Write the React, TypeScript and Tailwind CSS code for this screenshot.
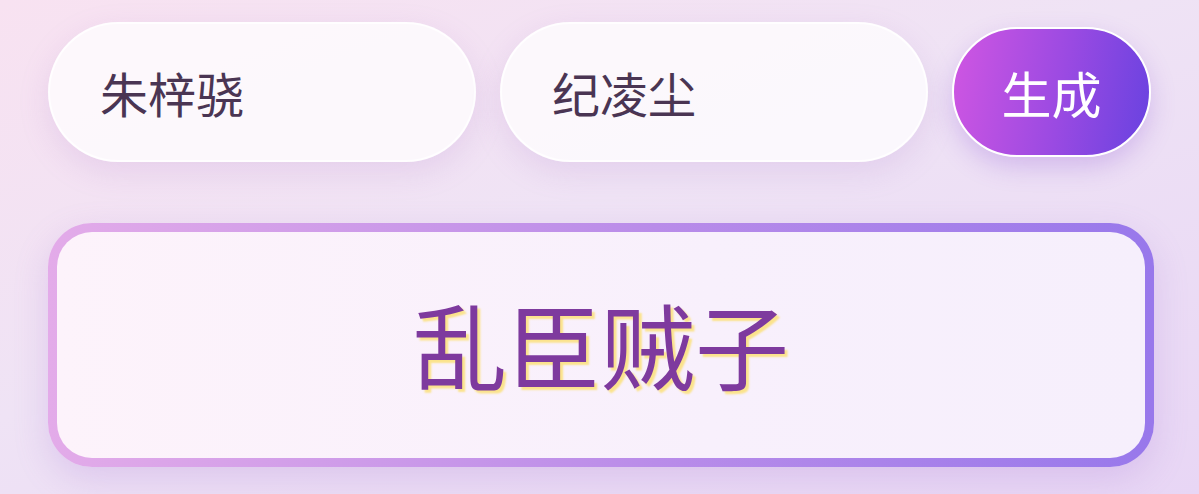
import { useState } from 'react'

const cjk = { fontFamily: '"Noto Sans CJK SC", "Noto Sans", sans-serif' }

function NameInput({ value, onChange }: { value: string; onChange: (v: string) => void }) {
  return (
    <input
      value={value}
      onChange={(e) => onChange(e.target.value)}
      style={cjk}
      className="h-[140px] w-[428px] rounded-full border-2 border-white/80 bg-white/75 pl-[50px] pr-6 text-[48px] text-[#4a3553] shadow-[0_10px_30px_rgba(170,120,200,0.18)] outline-none"
    />
  )
}

export default function App() {
  const [first, setFirst] = useState('朱梓骁')
  const [second, setSecond] = useState('纪凌尘')

  return (
    <div
      style={cjk}
      className="flex h-[494px] w-full flex-col bg-[linear-gradient(160deg,#f8e2f1_0%,#efe3f5_45%,#e8d6f5_100%)] px-[48px] pt-[22px]"
    >
      <div className="flex items-center gap-[24px]">
        <NameInput value={first} onChange={setFirst} />
        <NameInput value={second} onChange={setSecond} />
        <button
          type="button"
          className="h-[130px] w-[201px] rounded-full border-2 border-white bg-[linear-gradient(100deg,#d056e2_0%,#9a4ae2_55%,#6842e0_100%)] text-[50px] text-white shadow-[0_10px_24px_rgba(130,70,210,0.25)]"
        >
          生成
        </button>
      </div>

      <div className="mt-[61px] w-[1106px] rounded-[44px] bg-[linear-gradient(90deg,#e3abe9_0%,#b98ce9_55%,#9878eb_100%)] p-[9px] shadow-[0_12px_34px_rgba(160,110,210,0.22)]">
        <div className="flex h-[226px] items-center justify-center rounded-[35px] bg-[linear-gradient(90deg,#fdf3fb_0%,#f8f0fc_60%,#f6effc_100%)]">
          <span className="-mt-[4px] text-[94px] font-normal leading-none text-[#7e3a9e] [text-shadow:3px_3px_2px_#fbe38c]">
            乱臣贼子
          </span>
        </div>
      </div>
    </div>
  )
}
